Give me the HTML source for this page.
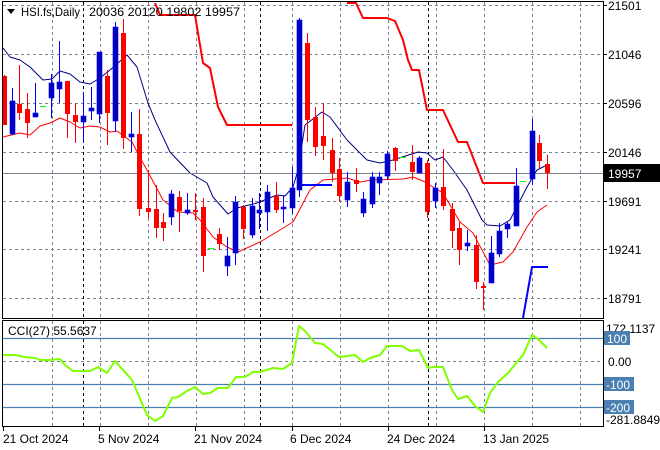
<!DOCTYPE html>
<html><head><meta charset="utf-8"><style>
html,body{margin:0;padding:0;background:#fff;width:660px;height:450px;overflow:hidden}
svg{display:block;font-family:"Liberation Sans",sans-serif}
</style></head><body>
<svg id="s" width="660" height="450" xmlns="http://www.w3.org/2000/svg">
<rect width="660" height="450" fill="#fff"/>
<g id="grid" stroke="#7a8290" stroke-width="1" stroke-dasharray="3,3"></g>
<g id="main"></g>
<line x1="2" y1="173.5" x2="603" y2="173.5" stroke="#7a8290" stroke-width="1"/>
<g id="cand"></g>
<rect x="2.5" y="1.5" width="601" height="317" fill="none" stroke="#000"/>
<rect x="2.5" y="320.5" width="601" height="106" fill="none" stroke="#000"/>
<g font-size="12" fill="#000">
<text x="21" y="16" textLength="59" lengthAdjust="spacingAndGlyphs">HSI.fs,Daily</text>
<text x="89" y="16" textLength="151" lengthAdjust="spacingAndGlyphs">20036 20120 19802 19957</text>
<text x="608" y="10">21501</text>
<text x="608" y="59">21046</text>
<text x="608" y="108">20596</text>
<text x="608" y="157">20146</text>
<rect x="604" y="164" width="56" height="18" fill="#000"/>
<text x="608" y="178" fill="#fff">19957</text>
<text x="608" y="206">19691</text>
<text x="608" y="254">19241</text>
<text x="608" y="303">18791</text>
<text x="8" y="335">CCI(27) 55.5637</text>
<text x="606" y="333">172.1137</text>
<rect x="604" y="331" width="26" height="14" fill="#4a7fb0"/>
<text x="607" y="343" fill="#fff">100</text>
<text x="608" y="366">0.00</text>
<rect x="604" y="377" width="30" height="14" fill="#4a7fb0"/>
<text x="606" y="389" fill="#fff">-100</text>
<rect x="604" y="400" width="30" height="14" fill="#4a7fb0"/>
<text x="606" y="412" fill="#fff">-200</text>
<text x="606" y="424">-281.8849</text>
<text x="3" y="443">21 Oct 2024</text>
<text x="98" y="443">5 Nov 2024</text>
<text x="194" y="443">21 Nov 2024</text>
<text x="290" y="443">6 Dec 2024</text>
<text x="387" y="443">24 Dec 2024</text>
<text x="483" y="443">13 Jan 2025</text>
</g>
<path d="M7 9 L15 9 L11 14 Z" fill="#000"/>
<g stroke="#000"><line x1="3.5" y1="427" x2="3.5" y2="431"/><line x1="99.5" y1="427" x2="99.5" y2="431"/><line x1="195.5" y1="427" x2="195.5" y2="431"/><line x1="292.5" y1="427" x2="292.5" y2="431"/><line x1="388.5" y1="427" x2="388.5" y2="431"/><line x1="484.5" y1="427" x2="484.5" y2="431"/>
<line x1="603" y1="5.5" x2="607" y2="5.5"/><line x1="603" y1="54.5" x2="607" y2="54.5"/><line x1="603" y1="103.5" x2="607" y2="103.5"/><line x1="603" y1="152.5" x2="607" y2="152.5"/><line x1="603" y1="201.5" x2="607" y2="201.5"/><line x1="603" y1="249.5" x2="607" y2="249.5"/><line x1="603" y1="298.5" x2="607" y2="298.5"/></g>
</svg>
<script>
var NS="http://www.w3.org/2000/svg";
function el(p,t,a){var e=document.createElementNS(NS,t);for(var k in a)e.setAttribute(k,a[k]);p.appendChild(e);return e;}
var g=document.getElementById('grid'),m=document.getElementById('main'),c=document.getElementById('cand');
[5,54,103,152,201,249,298].forEach(function(y){el(g,'line',{x1:3,y1:y+.5,x2:603,y2:y+.5});});
[52,100,148,196,244,292,340,388,436,484,532,580].forEach(function(x){el(g,'line',{x1:x+.5,y1:2,x2:x+.5,y2:318});el(g,'line',{x1:x+.5,y1:321,x2:x+.5,y2:426});});
[83,260,428].forEach(function(x){el(g,'line',{x1:x+.5,y1:2,x2:x+.5,y2:318,stroke:'#000'});el(g,'line',{x1:x+.5,y1:321,x2:x+.5,y2:426,stroke:'#000'});});
el(g,'line',{x1:3,y1:361.5,x2:603,y2:361.5});
[338,384,407].forEach(function(y){el(m,'line',{x1:3,y1:y+.5,x2:603,y2:y+.5,stroke:'#4a7fb0','stroke-width':1.2});});
function pl(pts,col,w){el(m,'polyline',{points:pts,fill:'none',stroke:col,'stroke-width':w,'stroke-linejoin':'round'});}
pl("3,137 20,133 30,135 40,126 50,123 60,118 70,122 80,128 90,126 100,127 110,132 117,131 132,142 143,163 147,170 163,200 178,212 193,213 200,220 213,237 227,247 238,252 260,242 280,230 293,222 310,190 323,180 347,178 360,182 372,180 403,179 413,177 423,181 443,193 460,222 473,233 490,265 503,262 513,252 527,227 537,212 547,205","#ff0000",1);
pl("3,48 10,57 20,60 30,67 43,80 52,79 60,71 70,74 80,82 90,84 100,78 110,70 118,63 127,55 137,67 148,103 155,120 170,152 190,173 207,183 213,197 228,214 237,208 257,203 277,195 285,196 293,187 298,170 305,125 322,112 330,117 347,140 367,160 380,163 393,160 418,152 427,153 435,160 443,157 453,170 467,190 482,220 487,225 500,226 510,220 527,187 537,170 547,165","#000080",1);
pl("155,3 160,15 195,15 203,63 210,68 218,107 227,125 292,125","#ff0000",2);
pl("347,3 356,3 363,18 387,18 395,21 403,40 408,60 412,70 419,70 427,110 443,110 458,142 467,142 483,183 515,183","#ff0000",2);
pl("298,185 332,185","#0000ff",2);
pl("523,318 532,267 548,267","#0000ff",2);
pl("3,355 15,355 25,357 35,358 40,360 50,360 60,359 65,365 73,371 90,371 98,367 107,373 115,361 132,380 147,415 155,421 163,416 172,398 178,397 187,391 195,387 203,394 210,393 218,388 228,388 236,377 245,377 253,372 260,372 273,368 283,369 292,363 299,326 305,331 315,343 323,344 339,357 355,355 363,362 370,358 380,355 387,346 402,346 410,351 419,350 428,368 433,367 443,367 452,390 458,399 467,396 475,406 483,412 490,393 498,382 508,373 517,362 523,355 532,335 538,339 547,348","#7fff00",2);
var C=[[4,'r',76,125,75,125],[12,'b',101,134,88,135],[19,'r',104,113,65,120],[27,'r',109,123,93,138],[35,'b',113,117,83,117],[43,'g',106,106,106,106],[51,'b',83,98,74,118],[59,'b',82,89,41,103],[67,'r',81,114,81,138],[75,'r',115,122,103,143],[83,'b',116,122,92,143],[91,'b',108,111,87,120],[99,'b',52,114,52,123],[107,'r',76,113,70,145],[115,'b',27,121,22,132],[123,'r',33,138,19,149],[131,'b',134,137,112,152],[139,'r',134,209,109,216],[148,'r',208,212,170,218],[156,'r',209,228,185,238],[163,'r',222,228,213,241],[171,'b',194,217,190,225],[179,'r',197,211,191,232],[187,'b',210,213,193,215],[195,'r',210,212,193,220],[203,'r',207,256,198,272],[211,'g',248,248,248,248],[219,'r',234,244,228,250],[227,'b',256,266,237,276],[235,'b',202,253,196,265],[243,'r',207,229,205,239],[252,'b',206,235,198,238],[259,'b',210,213,193,229],[267,'b',192,212,185,231],[276,'r',196,210,182,213],[283,'b',207,209,195,223],[292,'b',188,208,167,214],[299,'b',20,190,18,197],[307,'r',43,120,33,142],[315,'r',117,147,107,156],[323,'r',136,146,103,160],[332,'r',150,173,138,182],[339,'r',169,196,158,202],[347,'b',182,200,172,207],[356,'r',180,184,168,192],[363,'b',199,213,192,217],[372,'b',177,204,172,208],[379,'b',177,183,172,195],[387,'b',154,176,151,180],[395,'r',148,161,147,171],[403,'g',157,157,157,157],[412,'r',162,172,145,180],[419,'b',158,173,156,173],[427,'r',163,212,160,218],[435,'b',188,201,183,208],[443,'r',187,206,149,210],[452,'r',209,231,203,248],[459,'r',228,250,222,265],[467,'b',243,246,230,251],[476,'r',245,282,235,289],[483,'r',286,288,282,310],[491,'b',253,283,236,283],[499,'b',231,254,223,257],[507,'b',224,229,222,238],[516,'b',186,226,168,226],[523,'g',181,181,181,181],[532,'b',131,179,119,185],[539,'r',143,161,135,168],[547,'r',164,173,155,189]];
C.forEach(function(d){var x=d[0],col=d[1]=='r'?'#ff0000':(d[1]=='b'?'#0000c0':'#00dd00');
if(d[1]=='g'){el(c,'line',{x1:x-3,y1:d[2]+.5,x2:x+3,y2:d[2]+.5,stroke:'#00ff00'});return;}
el(c,'line',{x1:x+.5,y1:d[4],x2:x+.5,y2:d[5],stroke:d[1]=='r'?'#ff0000':'#0000ff'});
var h=Math.max(2,d[3]-d[2]);el(c,'rect',{x:x-2,y:d[2],width:5,height:h,fill:col,stroke:d[1]=='b'?'#0000ff':'none','stroke-width':d[1]=='b'?0.6:0});});
</script>
</body></html>
